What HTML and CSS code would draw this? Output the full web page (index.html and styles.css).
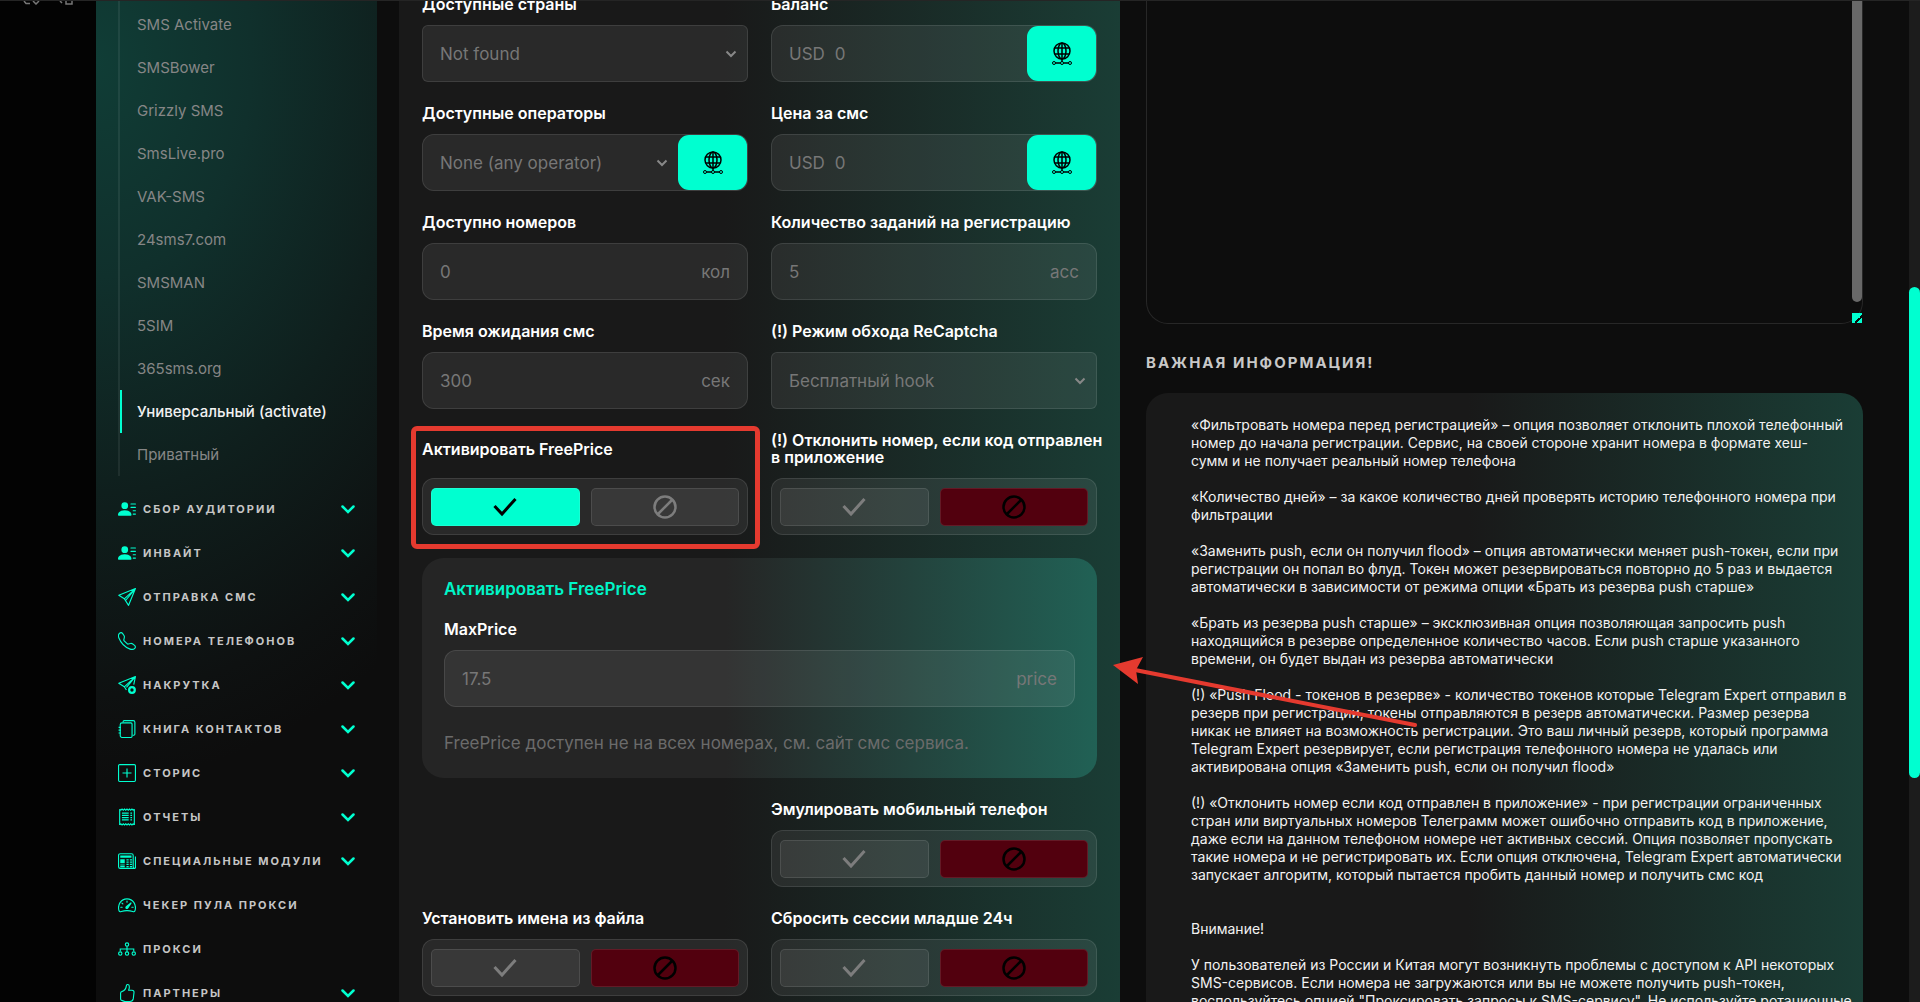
FILE: index.html
```
<!DOCTYPE html>
<html lang="ru">
<head>
  <meta charset="UTF-8">
  <meta name="viewport" content="width=device-width, initial-scale=1.0">
  <title>Telegram Expert</title>
  <link rel="stylesheet" href="styles.css">
</head>
<body>
  <!-- icon set -->
  <svg class="sprite" viewBox="0 0 16 16">
    <symbol id="i-person" viewBox="0 0 16 16">
      <path fill="currentColor" d="M6 8a3 3 0 1 0 0-6 3 3 0 0 0 0 6m-5 6s-1 0-1-1 1-4 6-4 6 3 6 4-1 1-1 1zM11 3.5a.5.5 0 0 1 .5-.5h4a.5.5 0 0 1 0 1h-4a.5.5 0 0 1-.5-.5m.5 2.5a.5.5 0 0 0 0 1h4a.5.5 0 0 0 0-1zm2 3a.5.5 0 0 0 0 1h2a.5.5 0 0 0 0-1zm0 3a.5.5 0 0 0 0 1h2a.5.5 0 0 0 0-1z"/>
    </symbol>
    <symbol id="i-send" viewBox="0 0 16 16">
      <path fill="none" stroke="currentColor" stroke-linejoin="round" d="M15.500.500L.7 6.400l4.900 3.200 3.800 5.800zM15.500.500L5.600 9.600M15.500.500L6.900 10.900"/>
    </symbol>
    <symbol id="i-phone" viewBox="0 0 16 16">
      <path fill="none" stroke="currentColor" stroke-linejoin="round" d="M1.300 1.200C2.100.400 3.300.300 4 1.200l1.300 1.900c.4.600.5 1.200.3 1.800l-.4 1.800c-.1.400 0 .8.300 1.100l2.600 2.600c.3.300.7.400 1.100.3l1.900-.5c.6-.2 1.200 0 1.700.3l1.900 1.400c.9.700 1 1.900.2 2.600-1.200 1.200-2.300 1.300-4.100.7C6.300 13.600 2.600 9.800.8 5.300.1 3.600.2 2.300 1.300 1.200z"/>
    </symbol>
    <symbol id="i-boost" viewBox="0 0 16 16">
      <path fill="none" stroke="currentColor" stroke-linejoin="round" d="M14 7.600L15.500.500.700 6.400l4.900 3.200 1.900 2.900M15.500.500L5.600 9.600M15.500.500L7.500 10.200"/>
      <circle cx="12.400" cy="12.400" r="2.500" fill="none" stroke="currentColor" stroke-width="2"/>
    </symbol>
    <symbol id="i-book" viewBox="0 0 16 16">
      <g fill="none" stroke="currentColor">
        <path d="M3.500 2.500h8a1 1 0 0 1 1 1v11a1 1 0 0 1-1 1h-8a1.500 1.500 0 0 1-1.500-1.500V4a1.500 1.500 0 0 1 1.500-1.500z"/>
        <path d="M4.500 2V1.500a1 1 0 0 1 1-1h8a1.500 1.500 0 0 1 1.500 1.500v10.500a1 1 0 0 1-1 1h-1M.500 6.500h2M.500 9h2M.500 11.500h2"/>
      </g>
    </symbol>
    <symbol id="i-plus" viewBox="0 0 16 16">
      <path fill="none" stroke="currentColor" d="M1.500.500h13a1 1 0 0 1 1 1v13a1 1 0 0 1-1 1h-13a1 1 0 0 1-1-1v-13a1 1 0 0 1 1-1zM8 4v8M4 8h8"/>
    </symbol>
    <symbol id="i-receipt" viewBox="0 0 16 16">
      <path fill="none" stroke="currentColor" d="M1.500 1v14M14.500 1v14M3.500 4.500h6M3.500 6.500h6M3.500 8.500h6M3.500 10.500h6M11 4.500h1.500M11 6.500h1.500M11 8.500h1.500M11 10.500h1.500"/>
      <path fill="none" stroke="currentColor" d="M1.500 1l1 1 1.100-1 1.100 1 1.100-1 1.100 1L8 1l1.100 1 1.100-1 1.100 1 1.100-1 1.100 1 1-1M1.500 15l1-1 1.100 1 1.100-1 1.100 1 1.100-1L8 15l1.100-1 1.100 1 1.100-1 1.100 1 1.100-1 1 1"/>
    </symbol>
    <symbol id="i-news" viewBox="0 0 16 16">
      <path fill="none" stroke="currentColor" d="M2 1.500h10a1.500 1.500 0 0 1 1.500 1.500v10a1.500 1.500 0 0 0 1.500 1.500H2A1.500 1.500 0 0 1 .500 13V3A1.500 1.500 0 0 1 2 1.500zM15.500 4v9a1 1 0 0 1-1 1.500M2 11.500h4M2 13h4M7.500 7h2M7.500 9h2M7.500 11h2M7.500 13h2M10.500 7h2M10.500 9h2M10.500 11h2M10.500 13h2"/>
      <path fill="currentColor" d="M2 3h10v2H2zM2 6.500h4v3.500H2z"/>
    </symbol>
    <symbol id="i-speed" viewBox="0 0 16 16">
      <path fill="none" stroke="currentColor" stroke-linecap="round" d="M1 13.400C-.800 7.800 2.600 2.500 8 2.500s8.800 5.300 7 10.900c-.4.700-1.100.7-1.900.4-3.300-1.100-6.900-1.100-10.200 0-.8.300-1.500.3-1.900-.4zM8 4.500v1M3.500 6.300l.8.700M2.500 10h1.200M12.300 10h1.200"/>
      <path fill="currentColor" stroke="currentColor" d="M11.800 6L8.700 10.700a.9.9 0 1 1-1.300-1.200z"/>
    </symbol>
    <symbol id="i-net" viewBox="0 0 16 16">
      <g fill="none" stroke="currentColor">
        <circle cx="8" cy="4" r="1.500"/>
        <circle cx="2" cy="12" r="1.500"/>
        <circle cx="8" cy="12" r="1.500"/>
        <circle cx="14" cy="12" r="1.500"/>
        <path d="M8 5.500v5M2 10V8h12v2"/>
      </g>
    </symbol>
    <symbol id="i-thumb" viewBox="0 0 16 16">
      <path fill="none" stroke="currentColor" stroke-linejoin="round" d="M8.800.500c.9.100 1.300 1 1.300 2.100 0 1-.3 2.100-.7 2.900h3c1.300 0 2 1 1.800 2.200l-.6 5.300c-.3 1.500-1.300 2.500-2.900 2.500H6.500c-1.400 0-2.100-.7-3.200-.9-.8-.2-1-.6-1-1.300V8.200c0-.8.300-1.200 1-1.400 2.100-.7 3.900-2.500 4.100-5.100.1-.7.600-1.300 1.400-1.200z"/>
    </symbol>
    <symbol id="i-down" viewBox="0 0 14 9">
      <path fill="none" stroke="currentColor" stroke-width="2.500" stroke-linecap="round" d="M1.500 1.500L7 7l5.500-5.500"/>
    </symbol>
    <symbol id="i-globe" viewBox="0 0 20 24">
      <g fill="none" stroke="#000" stroke-width="1.500">
        <circle cx="10" cy="9" r="8"/>
        <ellipse cx="10" cy="9" rx="4" ry="8"/>
        <path d="M10 1v19M2.800 6h14.400M2.800 12h14.400M2 21h16"/>
      </g>
      <g fill="#00ffd0" stroke="#000">
        <circle cx="2" cy="21" r="1.500"/>
        <circle cx="10" cy="21" r="1.500"/>
        <circle cx="18" cy="21" r="1.500"/>
      </g>
    </symbol>
    <symbol id="i-check" viewBox="0 0 24 24">
      <path fill="none" stroke="currentColor" stroke-width="3" d="M1.500 11l7.500 8L22.500 4"/>
    </symbol>
    <symbol id="i-ban" viewBox="0 0 24 24">
      <g fill="none" stroke="currentColor" stroke-width="2.500">
        <circle cx="12" cy="12" r="10.500"/>
        <path d="M19.500 4.500l-15 15"/>
      </g>
    </symbol>
  </svg>

  <div class="page">
    <div class="rail">
      <svg class="rail-icons" viewBox="0 0 52 4">
        <path fill="none" stroke="#777" stroke-width="1.500" d="M1 0l2 2.500h4M10 0l3 3 3-3M37 0l2 2M43 0v3h6V0"/>
      </svg>
    </div>

    <nav class="sidebar">
      <ul class="submenu">
        <li><a href="#">SMS Activate</a></li>
        <li><a href="#">SMSBower</a></li>
        <li><a href="#">Grizzly SMS</a></li>
        <li><a href="#">SmsLive.pro</a></li>
        <li><a href="#">VAK-SMS</a></li>
        <li><a href="#">24sms7.com</a></li>
        <li><a href="#">SMSMAN</a></li>
        <li><a href="#">5SIM</a></li>
        <li><a href="#">365sms.org</a></li>
        <li><a href="#" class="active">Универсальный (activate)</a></li>
        <li><a href="#">Приватный</a></li>
      </ul>
      <div class="menu">
        <button class="menu-item"><svg class="icon"><use href="#i-person"/></svg>Сбор аудитории<svg class="arrow"><use href="#i-down"/></svg></button>
        <button class="menu-item"><svg class="icon"><use href="#i-person"/></svg>Инвайт<svg class="arrow"><use href="#i-down"/></svg></button>
        <button class="menu-item"><svg class="icon"><use href="#i-send"/></svg>Отправка смс<svg class="arrow"><use href="#i-down"/></svg></button>
        <button class="menu-item"><svg class="icon"><use href="#i-phone"/></svg>Номера телефонов<svg class="arrow"><use href="#i-down"/></svg></button>
        <button class="menu-item"><svg class="icon"><use href="#i-boost"/></svg>Накрутка<svg class="arrow"><use href="#i-down"/></svg></button>
        <button class="menu-item"><svg class="icon"><use href="#i-book"/></svg>Книга контактов<svg class="arrow"><use href="#i-down"/></svg></button>
        <button class="menu-item"><svg class="icon"><use href="#i-plus"/></svg>Сторис<svg class="arrow"><use href="#i-down"/></svg></button>
        <button class="menu-item"><svg class="icon"><use href="#i-receipt"/></svg>Отчеты<svg class="arrow"><use href="#i-down"/></svg></button>
        <button class="menu-item"><svg class="icon"><use href="#i-news"/></svg>Специальные модули<svg class="arrow"><use href="#i-down"/></svg></button>
        <a href="#" class="menu-item"><svg class="icon"><use href="#i-speed"/></svg>Чекер пула прокси</a>
        <a href="#" class="menu-item"><svg class="icon"><use href="#i-net"/></svg>Прокси</a>
        <button class="menu-item"><svg class="icon"><use href="#i-thumb"/></svg>Партнеры<svg class="arrow"><use href="#i-down"/></svg></button>
      </div>
    </nav>

    <main class="settings">
      <div class="field">
        <label for="country">Доступные страны</label>
        <select id="country" class="box select"><option>Not found</option></select>
      </div>
      <div class="field">
        <label for="balance">Баланс</label>
        <div class="box">
          <span class="prefix">USD</span>
          <input id="balance" type="text" value="0">
          <button class="addon" aria-label="Обновить баланс"><svg><use href="#i-globe"/></svg></button>
        </div>
      </div>

      <div class="field">
        <label for="operator">Доступные операторы</label>
        <div class="box">
          <select id="operator" class="select"><option>None (any operator)</option></select>
          <button class="addon" aria-label="Обновить операторов"><svg><use href="#i-globe"/></svg></button>
        </div>
      </div>
      <div class="field">
        <label for="smsprice">Цена за смс</label>
        <div class="box">
          <span class="prefix">USD</span>
          <input id="smsprice" type="text" value="0">
          <button class="addon" aria-label="Обновить цену"><svg><use href="#i-globe"/></svg></button>
        </div>
      </div>

      <div class="field">
        <label for="numbers">Доступно номеров</label>
        <div class="box"><input id="numbers" type="text" value="0"><span class="suffix">кол</span></div>
      </div>
      <div class="field">
        <label for="tasks">Количество заданий на регистрацию</label>
        <div class="box"><input id="tasks" type="text" value="5"><span class="suffix">асс</span></div>
      </div>

      <div class="field">
        <label for="wait">Время ожидания смс</label>
        <div class="box"><input id="wait" type="text" value="300"><span class="suffix">сек</span></div>
      </div>
      <div class="field">
        <label for="captcha">(!) Режим обхода ReCaptcha</label>
        <select id="captcha" class="box select"><option>Бесплатный hook</option></select>
      </div>

      <div class="field marked">
        <div class="label">Активировать FreePrice</div>
        <div class="box toggle">
          <button class="yes on" aria-label="Включить"><svg><use href="#i-check"/></svg></button>
          <button class="no" aria-label="Отключить"><svg><use href="#i-ban"/></svg></button>
        </div>
      </div>
      <div class="field">
        <div class="label">(!) Отклонить номер, если код отправлен<br>в приложение</div>
        <div class="box toggle">
          <button class="yes" aria-label="Включить"><svg><use href="#i-check"/></svg></button>
          <button class="no on" aria-label="Отключить"><svg><use href="#i-ban"/></svg></button>
        </div>
      </div>

      <section class="panel">
        <h3>Активировать FreePrice</h3>
        <div class="field">
          <label for="maxprice">MaxPrice</label>
          <div class="box"><input id="maxprice" type="text" value="17.5"><span class="suffix">price</span></div>
        </div>
        <p>FreePrice доступен не на всех номерах, см. сайт смс сервиса.</p>
      </section>

      <div class="field second">
        <div class="label">Эмулировать мобильный телефон</div>
        <div class="box toggle">
          <button class="yes" aria-label="Включить"><svg><use href="#i-check"/></svg></button>
          <button class="no on" aria-label="Отключить"><svg><use href="#i-ban"/></svg></button>
        </div>
      </div>

      <div class="field">
        <div class="label">Установить имена из файла</div>
        <div class="box toggle">
          <button class="yes" aria-label="Включить"><svg><use href="#i-check"/></svg></button>
          <button class="no on" aria-label="Отключить"><svg><use href="#i-ban"/></svg></button>
        </div>
      </div>
      <div class="field">
        <div class="label">Сбросить сессии младше 24ч</div>
        <div class="box toggle">
          <button class="yes" aria-label="Включить"><svg><use href="#i-check"/></svg></button>
          <button class="no on" aria-label="Отключить"><svg><use href="#i-ban"/></svg></button>
        </div>
      </div>
    </main>

    <aside class="info">
      <div class="log">
        <textarea aria-label="Лог"></textarea>
        <span class="log-thumb"></span>
        <span class="log-grip"></span>
      </div>
      <h2>Важная информация!</h2>
      <div class="card">
        <p>«Фильтровать номера перед регистрацией» – опция позволяет отклонить плохой телефонный<br>
        номер до начала регистрации. Сервис, на своей стороне хранит номера в формате хеш-<br>
        сумм и не получает реальный номер телефона</p>
        <p>«Количество дней» – за какое количество дней проверять историю телефонного номера при<br>
        фильтрации</p>
        <p>«Заменить push, если он получил flood» – опция автоматически меняет push-токен, если при<br>
        регистрации он попал во флуд. Токен может резервироваться повторно до 5 раз и выдается<br>
        автоматически в зависимости от режима опции «Брать из резерва push старше»</p>
        <p>«Брать из резерва push старше» – эксклюзивная опция позволяющая запросить push<br>
        находящийся в резерве определенное количество часов. Если push старше указанного<br>
        времени, он будет выдан из резерва автоматически</p>
        <p>(!) «Push Flood - токенов в резерве» - количество токенов которые Telegram Expert отправил в<br>
        резерв при регистрации, токены отправляются в резерв автоматически. Размер резерва<br>
        никак не влияет на возможность регистрации. Это ваш личный резерв, который программа<br>
        Telegram Expert резервирует, если регистрация телефонного номера не удалась или<br>
        активирована опция «Заменить push, если он получил flood»</p>
        <p>(!) «Отклонить номер если код отправлен в приложение» - при регистрации ограниченных<br>
        стран или виртуальных номеров Телеграмм может ошибочно отправить код в приложение,<br>
        даже если на данном телефоном номере нет активных сессий. Опция позволяет пропускать<br>
        такие номера и не регистрировать их. Если опция отключена, Telegram Expert автоматически<br>
        запускает алгоритм, который пытается пробить данный номер и получить смс код<br><br></p>
        <p>Внимание!</p>
        <p>У пользователей из России и Китая могут возникнуть проблемы с доступом к API некоторых<br>
        SMS-сервисов. Если номера не загружаются или вы не можете получить push-токен,<br>
        воспользуйтесь опцией "Проксировать запросы к SMS-сервису". Не используйте ротационные</p>
      </div>
    </aside>

    <div class="scrollbar"><div class="thumb"></div></div>

    <svg class="pointer" viewBox="0 0 306 72">
      <path stroke="#e53a2f" stroke-width="4" stroke-linecap="round" d="M22 13l280 55"/>
      <path fill="#e53a2f" d="M0 8L30 0l-7 13 2 14z"/>
    </svg>
  </div>
</body>
</html>
```
FILE: styles.css
```
:root {
  --accent: #00ffd0;
  --bg: #0d0d0d;
  --muted: #777777;
  --red: #e53a2f;
  --box: rgba(255, 255, 255, 0.07);
  --line: rgba(255, 255, 255, 0.1);
}

* {
  box-sizing: border-box;
}

body {
  margin: 0;
  background: var(--bg);
  color: #fff;
  font-family: Inter, sans-serif;
  font-size: 17px;
}

button,
input,
select,
textarea {
  font: inherit;
  color: inherit;
  background: none;
  border: 0;
  padding: 0;
  margin: 0;
}

button {
  cursor: pointer;
}

a {
  color: inherit;
  text-decoration: none;
}

.sprite {
  display: none;
}

.page {
  position: relative;
  display: grid;
  grid-template-columns: 96px 281px minmax(0, 1fr) minmax(0, 1fr);
  height: 100vh;
  padding-right: 57px;
  border-top: 1px solid #252525;
  overflow: hidden;
}

.rail {
  background: #030303;
}

.rail-icons {
  display: block;
  width: 52px;
  height: 4px;
  margin-left: 23px;
}

/* sidebar */
.sidebar {
  background: radial-gradient(ellipse 520px 720px at 0 60px, #103d36, #10302c 30%, #0f1f1d 60%, #0e1111 88%, #0d0d0d);
}

.submenu {
  list-style: none;
  margin: 0 0 0 22px;
  padding: 2px 0 0;
  border-left: 2px solid rgba(255, 255, 255, 0.07);
  font-size: 15px;
  color: #868686;
}

.submenu a {
  display: block;
  line-height: 43px;
  padding-left: 15px;
  border-left: 2px solid transparent;
}

.submenu .active {
  color: #f2f2f2;
  font-weight: 500;
  border-color: var(--accent);
}

.menu {
  padding-top: 11px;
}

.menu-item {
  display: flex;
  align-items: center;
  gap: 7px;
  width: 100%;
  height: 44px;
  padding: 0 22px;
  font-size: 11px;
  font-weight: 700;
  letter-spacing: 2px;
  text-transform: uppercase;
  white-space: nowrap;
  color: #c6c6c6;
}

.icon {
  width: 18px;
  height: 18px;
  color: var(--accent);
}

.arrow {
  width: 14px;
  height: 9px;
  margin-left: auto;
  color: var(--accent);
}

/* settings */
.settings {
  margin: -5px 0 0 22px;
  padding: 0 23px;
  display: grid;
  grid-template-columns: minmax(0, 1fr) minmax(0, 1fr);
  gap: 23px;
  align-content: start;
  background: linear-gradient(90deg, #191919 45%, #1a3d35);
}

.field {
  display: flex;
  flex-direction: column;
  gap: 12px;
}

.field label,
.field .label {
  flex: 1;
  display: grid;
  align-items: center;
  font-size: 16px;
  font-weight: 600;
  line-height: 17px;
  white-space: nowrap;
}

.field .label {
  align-content: center;
}

.second {
  grid-column: 2;
}

.box {
  display: flex;
  align-items: center;
  width: 100%;
  height: 57px;
  background: var(--box);
  border: 1px solid var(--line);
  border-radius: 12px;
  color: var(--muted);
}

.box input {
  flex: 1;
  min-width: 0;
  height: 100%;
  padding-left: 17px;
}

.prefix {
  padding-left: 17px;
}

.prefix + input {
  padding-left: 10px;
}

.suffix {
  padding-right: 17px;
}

.select {
  flex: 1;
  min-width: 0;
  appearance: none;
  height: 100%;
  padding-left: 17px;
  color: var(--muted);
  background: url("data:image/svg+xml,%3Csvg xmlns='http://www.w3.org/2000/svg' width='12' height='8' viewBox='0 0 12 8'%3E%3Cpath fill='none' stroke='%23888' stroke-width='2' d='M1.500 1.500L6 6l4.500-4.500'/%3E%3C/svg%3E") no-repeat right 10px center;
}

.select.box {
  flex: none;
  height: 57px;
  background-color: var(--box);
  border-radius: 6px;
}

.addon {
  display: grid;
  place-items: center;
  width: 69px;
  height: 100%;
  background: var(--accent);
  border-radius: 11px;
}

.addon svg {
  width: 20px;
  height: 24px;
}

.toggle {
  gap: 11px;
  padding: 8px;
}

.toggle button {
  flex: 1;
  display: grid;
  place-items: center;
  height: 38px;
  background: var(--box);
  border: 1px solid var(--line);
  border-radius: 5px;
  color: #7d7d7d;
}

.toggle svg {
  width: 24px;
  height: 24px;
}

.toggle .yes.on {
  background: var(--accent);
  color: #000;
}

.toggle .no.on {
  background: #52000e;
  color: #000;
}

.marked {
  position: relative;
}

.marked::after {
  content: "";
  position: absolute;
  inset: -6px -12px -14px -11px;
  border: 5px solid var(--red);
  border-radius: 6px;
  pointer-events: none;
}

.panel {
  grid-column: 1 / -1;
  padding: 21px 22px 25px;
  border-radius: 22px;
  background: linear-gradient(90deg, #252525 45%, #216155);
}

.panel h3 {
  margin: 0 0 22px;
  font-size: 17px;
  font-weight: 600;
  line-height: 20px;
  color: #00f5c8;
}

.panel p {
  margin: 26px 0 0;
  line-height: 20px;
  color: #6b6b6b;
}

/* right column */
.info {
  margin-left: 26px;
}

.log {
  position: relative;
  height: 323px;
}

.log textarea {
  display: block;
  width: 100%;
  height: 100%;
  border: 1px solid #272727;
  border-top: 0;
  border-radius: 0 0 22px 22px;
  resize: none;
}

.log-thumb {
  position: absolute;
  top: 0;
  right: 1px;
  width: 10px;
  height: 301px;
  background: #686868;
  border-radius: 0 0 5px 5px;
}

.log-grip {
  position: absolute;
  right: 1px;
  bottom: 1px;
  width: 10px;
  height: 10px;
  background: linear-gradient(135deg, transparent 60%, #0d0d0d 60%, #0d0d0d 72%, transparent 72%), var(--accent);
}

.info h2 {
  margin: 28px 0 20px;
  font-size: 15px;
  font-weight: 700;
  line-height: 21px;
  letter-spacing: 2px;
  text-transform: uppercase;
  color: #c8c8c8;
}

.card {
  padding: 23px 0 24px 45px;
  border-radius: 22px 22px 0 0;
  background: linear-gradient(90deg, #191919 45%, #1a3d35);
  font-size: 14px;
  line-height: 18px;
  white-space: nowrap;
  color: #f2f2f2;
}

.card p {
  margin: 0 0 18px;
}

/* page scroll */
.scrollbar {
  position: absolute;
  top: 0;
  right: 0;
  bottom: 0;
  width: 11px;
  background: #1c1c1c;
}

.thumb {
  height: 491px;
  margin-top: 286px;
  background: var(--accent);
  border-radius: 6px;
}

.pointer {
  position: absolute;
  left: 1113px;
  top: 656px;
  width: 306px;
  height: 72px;
}
```
